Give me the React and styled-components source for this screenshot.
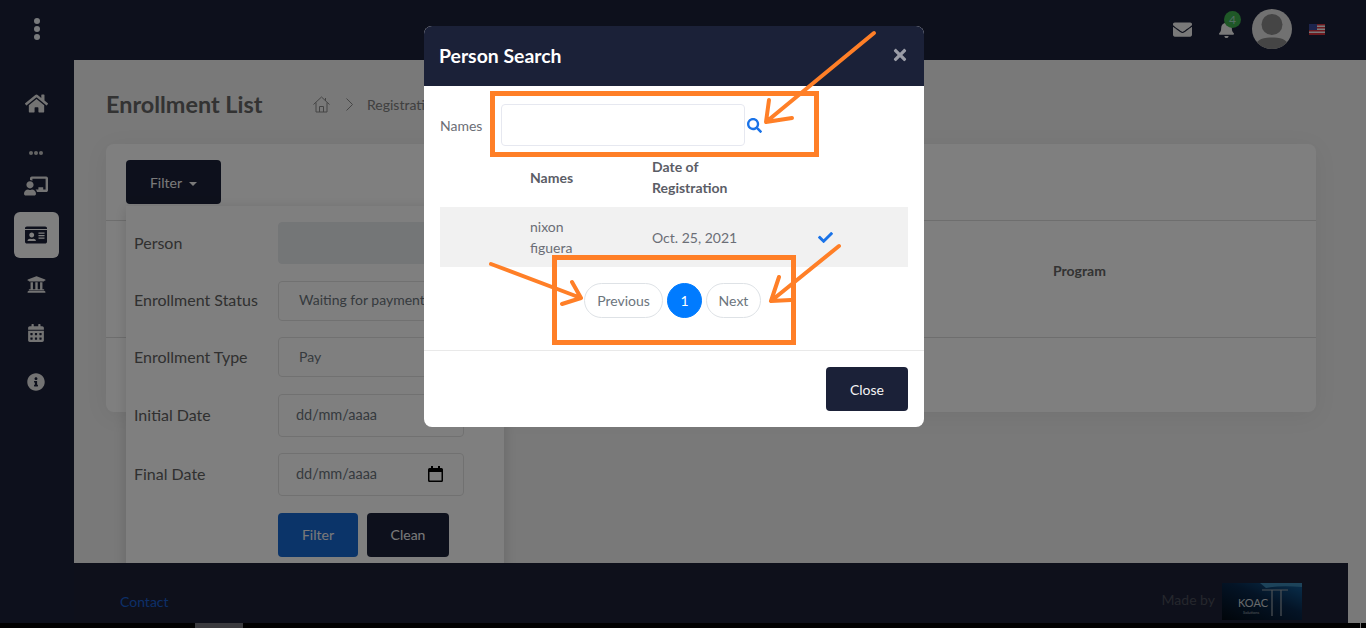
import React from "react";
import styled, { createGlobalStyle } from "styled-components";
import {
  FaHome,
  FaChalkboardTeacher,
  FaIdCard,
  FaUniversity,
  FaCalendarAlt,
  FaInfoCircle,
  FaEnvelope,
  FaBell,
  FaSearch,
  FaCheck,
  FaTimes,
} from "react-icons/fa";

const navy = "#1b2138";

const GlobalStyle = createGlobalStyle`
  html, body {
    margin: 0;
    padding: 0;
    overflow: hidden;
  }
  * {
    box-sizing: border-box;
  }
  body {
    font-family: "Lato", "Liberation Sans", sans-serif;
    font-size: 14px;
  }
`;

const Root = styled.div`
  position: relative;
  width: 1366px;
  height: 628px;
  display: flex;
  flex-direction: column;
  overflow: hidden;
  background: #000;
`;

const TopBar = styled.header`
  height: 60px;
  flex: none;
  display: flex;
  align-items: center;
  background: ${navy};
  color: #f2f2f2;
`;

const Kebab = styled.div`
  width: 73px;
  display: flex;
  flex-direction: column;
  align-items: center;
  gap: 2px;
  margin-top: -2px;
  span {
    width: 6px;
    height: 6px;
    border-radius: 50%;
    background: #f0f4f8;
  }
`;

const TopRight = styled.div`
  margin-left: auto;
  margin-top: -2px;
  display: flex;
  align-items: center;
  padding-right: 41px;
`;

const BellWrap = styled.div`
  position: relative;
  display: flex;
  margin-left: 26px;
  margin-right: 17px;
`;

const Badge = styled.span`
  position: absolute;
  top: -10px;
  left: 6px;
  width: 17px;
  height: 17px;
  border-radius: 50%;
  background: #3fb04f;
  color: #a4d8c8;
  font-size: 12px;
  line-height: 17px;
  text-align: center;
`;

const FlagSlot = styled.div`
  display: flex;
  margin-left: 17px;
`;

const Body = styled.div`
  flex: 1;
  min-height: 0;
  display: flex;
  background: #f2f2f2;
`;

const Sidebar = styled.nav`
  width: 74px;
  flex: none;
  padding: 20px 2px 0 0;
  display: flex;
  flex-direction: column;
  align-items: center;
  gap: 3px;
  background: ${navy};
`;

const NavItem = styled.div`
  width: 45px;
  height: 46px;
  display: flex;
  align-items: center;
  justify-content: center;
  border-radius: 6px;
  color: ${(p) => (p.$active ? navy : "#e6e6e6")};
  background: ${(p) => (p.$active ? "#fff" : "transparent")};
`;

const NavDots = styled.div`
  height: 31px;
  display: flex;
  align-items: flex-end;
  gap: 1px;
  padding-bottom: 5px;
  span {
    width: 4px;
    height: 4px;
    border-radius: 50%;
    background: #c8c8c8;
  }
`;

const Main = styled.main`
  width: 1274px;
  flex: none;
  display: flex;
  flex-direction: column;
`;

const Content = styled.section`
  flex: 1;
  min-height: 0;
  padding: 28px 32px 0;
`;

const TitleRow = styled.div`
  height: 56px;
  display: flex;
  align-items: flex-start;
`;

const Title = styled.h1`
  margin: -1px 0 0;
  width: 207px;
  font-size: 23.4px;
  line-height: 34px;
  font-weight: 700;
  color: #666;
`;

const Crumbs = styled.div`
  display: flex;
  align-items: center;
  height: 32px;
  color: #808080;
  font-size: 14px;
  svg:first-child {
    margin-right: 16px;
  }
  svg + svg {
    margin-right: 14px;
  }
`;

const Card = styled.div`
  position: relative;
  height: 268px;
  background: #fff;
  border-radius: 8px;
  box-shadow: 0 4px 24px rgba(0, 0, 0, 0.06);
`;

const CardHead = styled.div`
  height: 77px;
  padding: 16px 20px;
  border-bottom: 1px solid #dcdcdc;
`;

const DarkButton = styled.button`
  height: 44px;
  padding: 0;
  width: ${(p) => p.$w}px;
  border: 0;
  border-radius: 4px;
  background: ${(p) => p.$bg || navy};
  color: #f4f4f4;
  font: inherit;
  font-size: 14px;
`;

const Caret = styled.i`
  display: inline-block;
  margin-left: 7px;
  vertical-align: 2px;
  border-top: 4px solid currentColor;
  border-left: 4px solid transparent;
  border-right: 4px solid transparent;
`;

const TableRow = styled.div`
  height: 117px;
  padding: 40px 0 0 947px;
  border-bottom: 1px solid #dcdcdc;
  font-weight: 700;
  color: #666;
  line-height: 20px;
`;

const FilterPanel = styled.form`
  position: absolute;
  left: 20px;
  top: 62px;
  width: 378px;
  height: 400px;
  padding: 16px 8px;
  display: flex;
  flex-direction: column;
  gap: 16.5px;
  background: #fff;
  box-shadow: 0 2px 12px rgba(0, 0, 0, 0.15);
`;

const Field = styled.div`
  display: flex;
  align-items: center;
  height: ${(p) => p.$h}px;
`;

const FieldLabel = styled.label`
  width: 144px;
  flex: none;
  margin-top: -2px;
  font-size: 16px;
  color: #616161;
`;

const Control = styled.div`
  width: 186px;
  height: 100%;
  display: flex;
  align-items: center;
  justify-content: space-between;
  padding: 0 20px 2px ${(p) => p.$pad || 20}px;
  border: 1px solid ${(p) => (p.$disabled ? "#e9ecef" : "#e2e2e2")};
  border-radius: 4px;
  background: ${(p) => (p.$disabled ? "#e9ecef" : "#fff")};
  color: #6c757d;
  font-size: ${(p) => p.$size || 14}px;
  white-space: nowrap;
  overflow: hidden;
`;

const ButtonRow = styled.div`
  display: flex;
  gap: 9px;
  padding-left: 144px;
`;

const Footer = styled.footer`
  position: relative;
  z-index: 1;
  height: 60px;
  flex: none;
  display: flex;
  align-items: center;
  padding: 0 46px;
  background: #1c2136;
`;

const ContactLink = styled.a`
  color: #1a5fd0;
  font-size: 14px;
  margin-top: 16px;
`;

const MadeBy = styled.div`
  margin-left: auto;
  margin-top: 16px;
  display: flex;
  align-items: center;
  gap: 7px;
  color: #4b4e5a;
  font-size: 14px;
  span {
    margin-top: -4px;
  }
`;

const ScrollStrip = styled.div`
  position: relative;
  z-index: 3;
  height: 5px;
  flex: none;
  display: flex;
  background: #000;
`;

const ScrollThumb = styled.span`
  display: block;
  height: 5px;
  width: ${(p) => p.$w}px;
  margin-left: ${(p) => p.$left}px;
  background: ${(p) => p.$color};
`;

const Backdrop = styled.div`
  position: absolute;
  inset: 0;
  z-index: 2;
  display: flex;
  justify-content: center;
  align-items: flex-start;
  padding: 26px 18px 0 0;
  background: rgba(0, 0, 0, 0.5);
`;

const Modal = styled.div`
  width: 500px;
  height: 401px;
  display: flex;
  flex-direction: column;
  border-radius: 8px;
  overflow: hidden;
  background: #fff;
`;

const ModalHead = styled.div`
  height: 60px;
  flex: none;
  display: flex;
  align-items: center;
  justify-content: space-between;
  padding: 0 15px 2px 15px;
  background: ${navy};
  color: #fff;
  h2 {
    margin: 0;
    font-size: 19.4px;
    font-weight: 700;
  }
  svg {
    color: #9a9ca6;
  }
`;

const ModalBody = styled.div`
  flex: 1;
  padding: 18px 16px 0;
  color: #6b6e76;
`;

const SearchRow = styled.div`
  display: flex;
  align-items: center;
  height: 42px;
`;

const SearchLabel = styled.label`
  width: 61px;
  flex: none;
`;

const SearchInput = styled.input`
  width: 244px;
  height: 42px;
  border: 1px solid #e6e8f0;
  border-radius: 4px;
  outline: none;
  margin-right: 2px;
`;

const PersonGrid = styled.div`
  display: grid;
  grid-template-columns: 90px 122px 166px 90px;
  line-height: 21px;
`;

const HeadCell = styled.div`
  height: 61px;
  display: flex;
  align-items: center;
  font-weight: 700;
  color: #5b5d66;
`;

const NamesHead = styled(HeadCell)`
  padding-top: 2px;
`;

const Cell = styled.div`
  height: 60px;
  display: flex;
  align-items: center;
  background: #f1f1f1;
`;

const Pager = styled.div`
  display: flex;
  justify-content: center;
  gap: 4px;
  margin: 16px 3px 0 0;
`;

const PageLink = styled.a`
  height: 35px;
  width: ${(p) => p.$w}px;
  display: flex;
  align-items: center;
  justify-content: center;
  border-radius: 18px;
  border: 1px solid ${(p) => (p.$active ? "#007bff" : "#dee2e6")};
  background: ${(p) => (p.$active ? "#007bff" : "#fff")};
  color: ${(p) => (p.$active ? "#fff" : "#6c757d")};
  font-size: 14px;
`;

const ModalFoot = styled.div`
  height: 77px;
  flex: none;
  display: flex;
  align-items: flex-start;
  justify-content: flex-end;
  padding: 16px 16px 0;
  border-top: 1px solid #e9e9e9;
`;

const Marks = styled.svg`
  position: absolute;
  inset: 0;
  z-index: 3;
  pointer-events: none;
`;

const HomeOutline = () => (
  <svg width="17" height="17" viewBox="0 0 17 17" fill="none" stroke="#8a8a8a" strokeWidth="1">
    <path d="M0.500 8.500 8.500 1 16.500 8.500M3 6.500V16H14V6.500M6.500 16V10.500H10.500V16M12.500 2V5" />
  </svg>
);

const ChevronThin = () => (
  <svg width="7" height="13" viewBox="0 0 7 13" fill="none" stroke="#8a8a8a" strokeWidth="1">
    <path d="M0.500 0.500 6.500 6.500 0.500 12.500" />
  </svg>
);

const CalendarGlyph = () => (
  <svg width="15" height="16" viewBox="0 0 15 16">
    <path d="M3 0h2v2h5V0h2v2h1.500A1.500 1.500 0 0 1 15 3.500V14.500A1.500 1.500 0 0 1 13.500 16H1.500A1.500 1.500 0 0 1 0 14.500V3.500A1.500 1.500 0 0 1 1.500 2H3ZM1.500 6V14.500H13.500V6Z" fill="#000" />
  </svg>
);

const Avatar = () => (
  <svg width="40" height="40" viewBox="0 0 40 40">
    <circle cx="20" cy="20" r="20" fill="#e2e2e2" />
    <clipPath id="avatar-clip">
      <circle cx="20" cy="20" r="20" />
    </clipPath>
    <g clipPath="url(#avatar-clip)" fill="#8a8a8a">
      <circle cx="20" cy="15.500" r="10.500" />
      <path d="M3 40C3 31 10 28 20 28.500 30 28 37 31 37 40Z" />
    </g>
  </svg>
);

const Flag = () => (
  <svg width="16" height="11" viewBox="0 0 16 11">
    <rect width="16" height="11" fill="#f4f4f4" />
    <path d="M0 0h16v1.500H0ZM0 3h16v1.500H0ZM0 6h16v1.500H0ZM0 9h16v2H0Z" fill="#d8323c" />
    <rect width="8" height="6" fill="#3a4a9c" />
  </svg>
);

const KoacLogo = () => (
  <svg width="80" height="37" viewBox="0 0 80 37">
    <defs>
      <linearGradient id="koac-sea" x1="0" y1="1" x2="0.900" y2="0">
        <stop offset="0" stopColor="#020a14" />
        <stop offset="0.6" stopColor="#08284c" />
        <stop offset="1" stopColor="#125a94" />
      </linearGradient>
    </defs>
    <rect width="80" height="37" fill="url(#koac-sea)" />
    <path d="M38 0h42v4Q58 2 44 5Z" fill="#3a86b4" />
    <path d="M40 7H66M50 7V33M59 7V33" stroke="#9aa4ac" strokeWidth="1.200" fill="none" />
    <text x="16" y="24" fontFamily="Lato" fontSize="11" fill="#d0d4d8">KOAC</text>
    <text x="21" y="31" fontFamily="Lato" fontSize="4" fill="#a8b0b8">Solutions</text>
  </svg>
);

// hand drawn boxes and arrows on top of the screenshot
const Annotations = () => (
  <Marks width="1366" height="628" viewBox="0 0 1366 628" fill="none" stroke="#ff7f27" strokeLinecap="round" strokeLinejoin="round">
    <g strokeWidth="5" strokeLinecap="butt" strokeLinejoin="miter">
      <rect x="492.500" y="93.500" width="324" height="61" />
      <rect x="554.500" y="257.500" width="239" height="85" />
    </g>
    <g strokeWidth="4">
      <path d="M874 33 766 122M769 100 766 122 792 118" />
      <path d="M491 264 581 298M572 282 581 298 562 304" />
      <path d="M839 246 771 301M779 277 771 301 791 300" />
    </g>
  </Marks>
);

export default function App() {
  return (
    <Root>
      <GlobalStyle />
      <TopBar>
        <Kebab>
          <span />
          <span />
          <span />
        </Kebab>
        <TopRight>
          <FaEnvelope size={19} />
          <BellWrap>
            <FaBell size={17} />
            <Badge>4</Badge>
          </BellWrap>
          <Avatar />
          <FlagSlot>
            <Flag />
          </FlagSlot>
        </TopRight>
      </TopBar>

      <Body>
        <Sidebar>
          <NavItem>
            <FaHome size={23} />
          </NavItem>
          <NavDots>
            <span />
            <span />
            <span />
          </NavDots>
          <NavItem>
            <FaChalkboardTeacher size={24} />
          </NavItem>
          <NavItem $active>
            <FaIdCard size={22} />
          </NavItem>
          <NavItem>
            <FaUniversity size={19} />
          </NavItem>
          <NavItem>
            <FaCalendarAlt size={18} />
          </NavItem>
          <NavItem>
            <FaInfoCircle size={18} />
          </NavItem>
        </Sidebar>

        <Main>
          <Content>
            <TitleRow>
              <Title>Enrollment List</Title>
              <Crumbs>
                <HomeOutline />
                <ChevronThin />
                <span>Registration</span>
              </Crumbs>
            </TitleRow>
            <Card>
              <CardHead>
                <DarkButton $w={95}>
                  Filter
                  <Caret />
                </DarkButton>
              </CardHead>
              <TableRow>Program</TableRow>
              <FilterPanel>
                <Field $h={42}>
                  <FieldLabel>Person</FieldLabel>
                  <Control $disabled />
                </Field>
                <Field $h={40}>
                  <FieldLabel>Enrollment Status</FieldLabel>
                  <Control>Waiting for payment</Control>
                </Field>
                <Field $h={40}>
                  <FieldLabel>Enrollment Type</FieldLabel>
                  <Control>Pay</Control>
                </Field>
                <Field $h={43}>
                  <FieldLabel>Initial Date</FieldLabel>
                  <Control $pad={17} $size={14.5}>dd/mm/aaaa</Control>
                </Field>
                <Field $h={43}>
                  <FieldLabel>Final Date</FieldLabel>
                  <Control $pad={17} $size={14.5}>
                    dd/mm/aaaa
                    <CalendarGlyph />
                  </Control>
                </Field>
                <ButtonRow>
                  <DarkButton $w={80} $bg="#1769d2">
                    Filter
                  </DarkButton>
                  <DarkButton $w={82}>Clean</DarkButton>
                </ButtonRow>
              </FilterPanel>
            </Card>
          </Content>
          <Footer>
            <ContactLink>Contact</ContactLink>
            <MadeBy>
              <span>Made by</span>
              <KoacLogo />
            </MadeBy>
          </Footer>
        </Main>
      </Body>
      <ScrollStrip>
        <ScrollThumb $left={195} $w={48} $color="#3a3a3e" />
        <ScrollThumb $left={1117} $w={1} $color="#777" />
      </ScrollStrip>

      <Backdrop>
        <Modal>
          <ModalHead>
            <h2>Person Search</h2>
            <FaTimes size={18} />
          </ModalHead>
          <ModalBody>
            <SearchRow>
              <SearchLabel>Names</SearchLabel>
              <SearchInput />
              <FaSearch size={15} color="#1a73e8" />
            </SearchRow>
            <PersonGrid>
              <HeadCell />
              <NamesHead>Names</NamesHead>
              <HeadCell>
                Date of
                <br />
                Registration
              </HeadCell>
              <HeadCell />
              <Cell />
              <Cell>
                nixon
                <br />
                figuera
              </Cell>
              <Cell>Oct. 25, 2021</Cell>
              <Cell>
                <FaCheck size={15} color="#1a73e8" />
              </Cell>
            </PersonGrid>
            <Pager>
              <PageLink $w={79}>Previous</PageLink>
              <PageLink $w={35} $active>1</PageLink>
              <PageLink $w={55}>Next</PageLink>
            </Pager>
          </ModalBody>
          <ModalFoot>
            <DarkButton $w={82}>Close</DarkButton>
          </ModalFoot>
        </Modal>
      </Backdrop>
      <Annotations />
    </Root>
  );
}
